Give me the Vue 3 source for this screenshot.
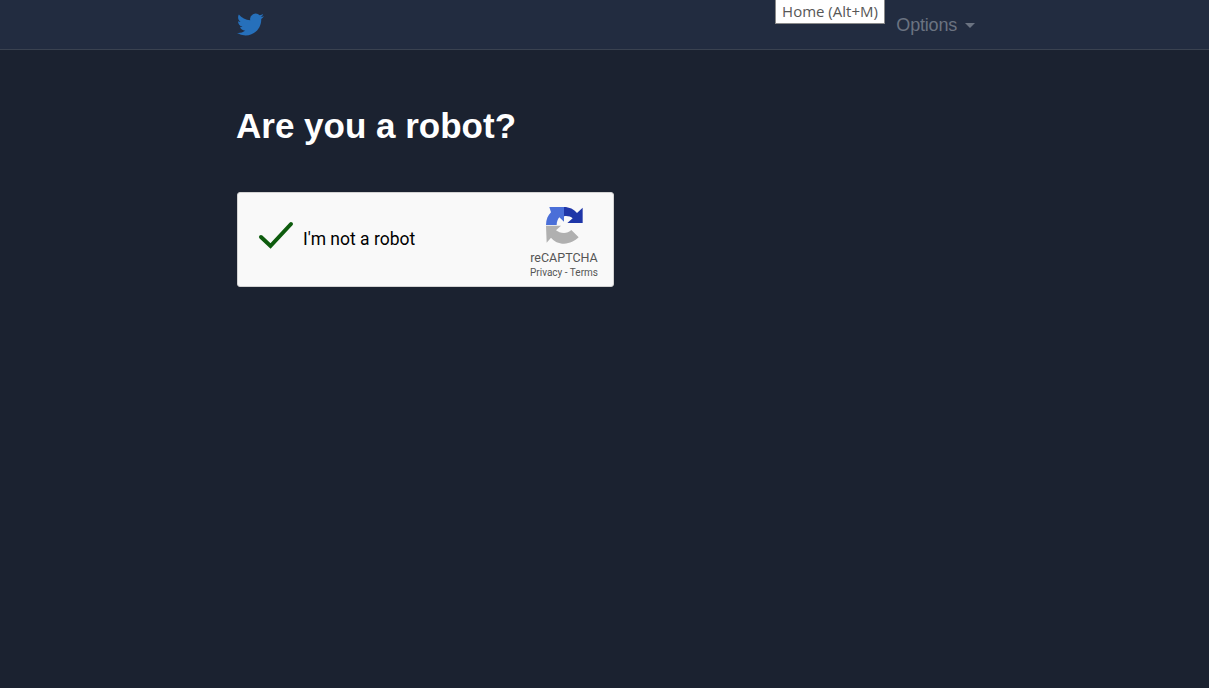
<script setup>
const title = 'Are you a robot?'
</script>

<template>
  <div class="page">
    <nav class="navbar">
      <div class="container nav-inner">
        <a class="brand" href="#">
          <svg class="bird" viewBox="0 0 24 24">
            <path fill="#2670bb" d="M23.953 4.57a10 10 0 01-2.825.775 4.958 4.958 0 002.163-2.723c-.951.555-2.005.959-3.127 1.184a4.92 4.92 0 00-8.384 4.482C7.69 8.095 4.067 6.13 1.64 3.162a4.822 4.822 0 00-.666 2.475c0 1.71.87 3.213 2.188 4.096a4.904 4.904 0 01-2.228-.616v.06a4.923 4.923 0 003.946 4.827 4.996 4.996 0 01-2.212.085 4.936 4.936 0 004.604 3.417 9.867 9.867 0 01-6.102 2.105c-.39 0-.779-.023-1.17-.067a13.995 13.995 0 007.557 2.209c9.053 0 13.998-7.496 13.998-13.985 0-.21 0-.42-.015-.63A9.935 9.935 0 0024 4.59z"/>
          </svg>
        </a>
        <a class="options" href="#">Options<span class="caret"></span></a>
      </div>
      <div class="tooltip">Home (Alt+M)</div>
    </nav>

    <main class="container content">
      <h1>{{ title }}</h1>
      <div class="captcha">
        <div class="captcha-left">
          <svg class="check" viewBox="0 0 36 30">
            <path d="M3 17 L12.5 26 L33 4" fill="none" stroke="#0e5c0e" stroke-width="4" stroke-linecap="round" stroke-linejoin="miter"/>
          </svg>
          <span class="label">I'm not a robot</span>
        </div>
        <div class="captcha-right">
          <svg class="logo" viewBox="0 0 135 135">
            <path fill="#1f36a8" d="M66 12C82 12 96 19 105 30L122 14V60H76L92 46C86 41 76 38 66 40Z"/>
            <path fill="#4a6fd8" d="M12 66C12 49 18 37 27 28L22 12H66V56L52 43C47 49 44 57 44 66Z"/>
            <path fill="#b0b0b0" d="M12 68H57L42 82C48 87 56 90 66 90C74 90 82 87 88 81L110 103C99 114 83 122 66 122C50 122 36 115 27 104L14 119Z"/>
          </svg>
          <div class="brand-name">reCAPTCHA</div>
          <div class="links">Privacy - Terms</div>
        </div>
      </div>
    </main>
  </div>
</template>

<style>
html, body {
  margin: 0;
  background: #1b2230;
}
</style>

<style scoped>
.page {
  position: relative;
  height: 688px;
  overflow: hidden;
  background: #1b2230;
  font-family: "Liberation Sans", Arial, sans-serif;
}

.container {
  width: 738px;
  margin-left: 237px;
}

.navbar {
  height: 49px;
  background: #222c40;
  border-bottom: 1px solid #3a4250;
}

.nav-inner {
  height: 49px;
  display: flex;
  align-items: center;
  justify-content: space-between;
}

.brand {
  display: flex;
}

.bird {
  width: 27px;
  height: 27px;
  margin-top: -1px;
}

.options {
  margin-top: 1px;
  color: #6b7381;
  font-size: 18px;
  text-decoration: none;
  letter-spacing: -0.2px;
}

.caret {
  display: inline-block;
  margin-left: 8px;
  vertical-align: middle;
  border-top: 5px solid #6b7381;
  border-left: 5px solid transparent;
  border-right: 5px solid transparent;
}

.tooltip {
  position: absolute;
  top: -1px;
  left: 775px;
  width: 110px;
  height: 25px;
  box-sizing: border-box;
  background: #fff;
  border: 1px solid #8a8a8a;
  color: #575757;
  font-family: "Open Sans", sans-serif;
  font-size: 15px;
  line-height: 22px;
  text-align: center;
  white-space: nowrap;
}

.content {
  padding-top: 54px;
}

h1 {
  margin: 0 0 45px -1px;
  color: #fff;
  font-size: 35px;
  line-height: 43px;
  font-weight: 700;
}

.captcha {
  width: 377px;
  height: 95px;
  box-sizing: border-box;
  display: flex;
  justify-content: space-between;
  background: #f9f9f9;
  border: 1px solid #d3d3d3;
  border-radius: 3px;
  font-family: Roboto, sans-serif;
}

.captcha-left {
  display: flex;
  align-items: center;
  padding-left: 20px;
}

.check {
  width: 36px;
  height: 30px;
  margin-top: -9px;
}

.label {
  margin-left: 9px;
  margin-top: -1px;
  color: #000;
  font-size: 17.5px;
}

.captcha-right {
  width: 78px;
  margin-right: 10px;
  display: flex;
  flex-direction: column;
  align-items: center;
  color: #555;
}

.logo {
  width: 45px;
  height: 45px;
  margin-top: 10px;
}

.brand-name {
  margin-top: 2px;
  font-size: 12.5px;
  line-height: 16px;
}

.links {
  font-size: 10px;
  line-height: 13px;
}
</style>
